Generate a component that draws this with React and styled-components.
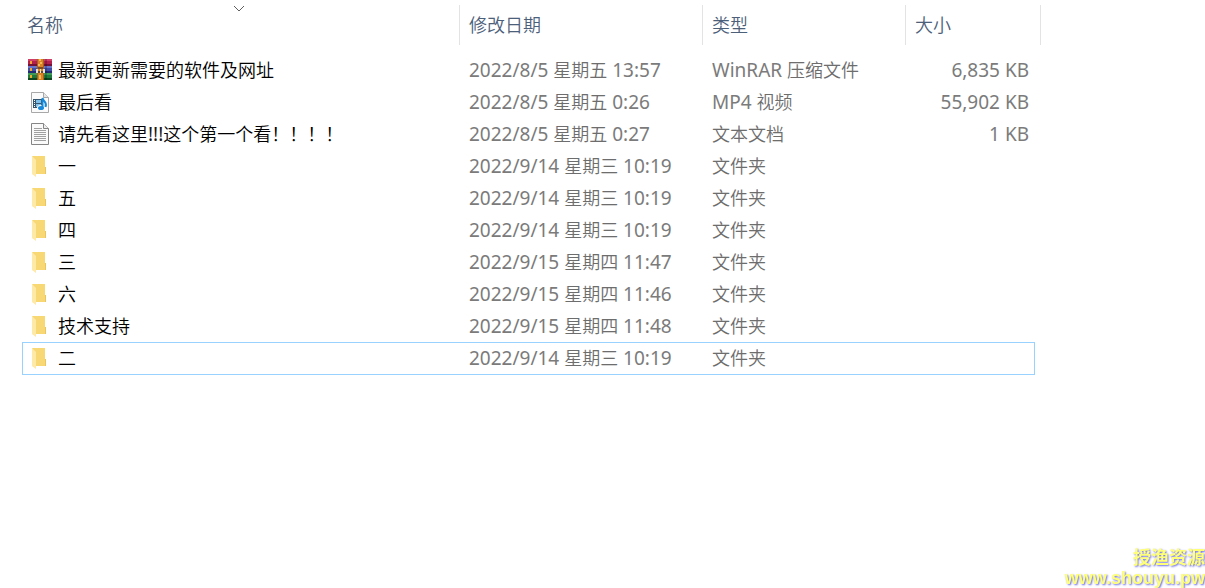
import React from 'react'
import styled, {createGlobalStyle} from 'styled-components'

const files = [
    {name:'最新更新需要的软件及网址', date:'2022/8/5 星期五 13:57', type:'WinRAR 压缩文件', size:'6,835 KB', icon:'rar'},
    {name:'最后看', date:'2022/8/5 星期五 0:26', type:'MP4 视频', size:'55,902 KB', icon:'video'},
    {name:'请先看这里!!!这个第一个看！！！！', date:'2022/8/5 星期五 0:27', type:'文本文档', size:'1 KB', icon:'text'},
    {name:'一', date:'2022/9/14 星期三 10:19', type:'文件夹', icon:'folder'},
    {name:'五', date:'2022/9/14 星期三 10:19', type:'文件夹', icon:'folder'},
    {name:'四', date:'2022/9/14 星期三 10:19', type:'文件夹', icon:'folder'},
    {name:'三', date:'2022/9/15 星期四 11:47', type:'文件夹', icon:'folder'},
    {name:'六', date:'2022/9/15 星期四 11:46', type:'文件夹', icon:'folder'},
    {name:'技术支持', date:'2022/9/15 星期四 11:48', type:'文件夹', icon:'folder'},
    {name:'二', date:'2022/9/14 星期三 10:19', type:'文件夹', icon:'folder', focused:true},
]

const RarIcon = ()=>(
    <Icon viewBox="0 0 24 24">
        <rect x="0" y="1" width="24" height="7" fill="#b3204d"/>
        <rect x="0" y="1" width="24" height="2" fill="#cf3f68"/>
        <rect x="0" y="6" width="24" height="2" fill="#741237"/>
        <rect x="0" y="8" width="24" height="7" fill="#3f4fa8"/>
        <rect x="0" y="8" width="24" height="2" fill="#6a76c8"/>
        <rect x="0" y="13" width="24" height="2" fill="#222b70"/>
        <rect x="0" y="15" width="24" height="7" fill="#1d7a3c"/>
        <rect x="0" y="15" width="24" height="2" fill="#3f9a58"/>
        <rect x="0" y="20" width="24" height="2" fill="#0c4520"/>
        <path d="M2 3h2v3H2zM2 10h2v3H2zM2 17h2v3H2z" fill="#f0a52c"/>
        <path d="M17 1h2v21h-2z" fill="#00000033"/>
        <rect x="9" y="1" width="7" height="21" fill="#d98324"/>
        <path d="M11 1h2v2h-2zM12 4h2v2h-2zM10 6h2v2h-2zM11 17h2v4h-2z" fill="#f8b95a"/>
        <path d="M9 1h1v21H9zM15 1h1v21h-1z" fill="#a8601c"/>
        <path d="M8 11h2v4H8zM15 11h2v4h-2z" fill="#e4e2dd"/>
        <path d="M10 9h5v2h-5z" fill="#7b4a26"/>
        <path d="M10 13h5v2h-5z" fill="#6b4630"/>
        <rect x="12" y="11" width="1" height="4" fill="#f4e8cf"/>
    </Icon>
)

const VideoIcon = ()=>(
    <Icon viewBox="0 0 24 24">
        <path d="M3.500 2.500h12l5 5v15h-17z" fill="#fbfbfb" stroke="#a8a8a8"/>
        <path d="M15.500 2.500v5h5" fill="#e6e6e6" stroke="#a8a8a8"/>
        <rect x="5" y="9" width="9" height="9" fill="#35546e"/>
        <path d="M8 10h5v3H8zM8 14h5v3H8z" fill="#7fc0ea"/>
        <path d="M6 10h1v1H6zM6 12h1v1H6zM6 14h1v1H6zM6 16h1v1H6z" fill="#fff"/>
        <ellipse cx="13" cy="18" rx="4" ry="3" fill="#fbfbfb"/>
        <path d="M14.500 18V8c1 4 5 4 3 9" fill="none" stroke="#1688d8" strokeWidth="2"/>
        <ellipse cx="13" cy="18" rx="3" ry="2" fill="#1688d8"/>
    </Icon>
)

const TextIcon = ()=>(
    <Icon viewBox="0 0 24 24">
        <path d="M3.500 1.500h12l5 5v16h-17z" fill="#fafafa" stroke="#858585"/>
        <path d="M15.500 1.500v5h5" fill="#eee" stroke="#858585"/>
        <path d="M6 6.500h8M6 8.500h12M6 10.500h12M6 12.500h12M6 14.500h12M6 16.500h12M6 18.500h12" stroke="#a0a0a0"/>
    </Icon>
)

const FolderIcon = ()=>(
    <Icon viewBox="0 0 24 24">
        <path d="M4 2h13v11h1v7H8z" fill="#f8d775"/>
        <path d="M17 13h1v7h-1z" fill="#e9c45f"/>
        <path d="M4 2l4 4v17l-4-3z" fill="#ffe9a6"/>
    </Icon>
)

const icons = {rar:RarIcon, video:VideoIcon, text:TextIcon, folder:FolderIcon}

// latin runs are set one size larger than the chinese around them
const Mixed = ({text})=> text.split(/([\x20-\x7e]+)/).map((part, i)=>
    i % 2 ? <Latin key={i}>{part}</Latin> : part
)

const FileRow = ({file})=>{
    const FileIcon = icons[file.icon]
    return(
        <Row $focused={file.focused}>
            <NameCell>
                <FileName><FileIcon/><NameText><Mixed text={file.name}/></NameText></FileName>
            </NameCell>
            <Cell><Mixed text={file.date}/></Cell>
            <Cell><Mixed text={file.type}/></Cell>
            <SizeCell><Mixed text={file.size || ''}/></SizeCell>
        </Row>
    )
}

export default function App(){
    return(
        <Page>
            <GlobalStyle/>
            <FileTable>
                <colgroup>
                    <col/>
                    <Col $width={243}/>
                    <Col $width={203}/>
                    <Col $width={129}/>
                    <Col $width={6}/>
                </colgroup>
                <thead>
                    <tr>
                        <HeadCell aria-sort="ascending">
                            <HeadButton $first>名称</HeadButton>
                            <SortMark viewBox="0 0 12 7"><path d="M1 1l5 5 5-5"/></SortMark>
                        </HeadCell>
                        <HeadCell><HeadButton>修改日期</HeadButton></HeadCell>
                        <HeadCell><HeadButton>类型</HeadButton></HeadCell>
                        <HeadCell colSpan={2}><HeadButton>大小</HeadButton></HeadCell>
                    </tr>
                </thead>
                <tbody>
                    {files.map(file=><FileRow key={file.name} file={file}/>)}
                </tbody>
            </FileTable>
            <Watermark>
                <span>授渔资源</span>
                <span>www.shouyu.pw</span>
            </Watermark>
        </Page>
    )
}

const GlobalStyle = createGlobalStyle`
body{
    margin:0;
    background-color:#FFFFFF;
    font-family:"Noto Sans CJK SC", sans-serif;
    font-size:18px;
    font-weight:350;
}
`

const Page = styled.main`
box-sizing:border-box;
min-height:100vh;
padding:5px 164px 0px 22px;
`

const FileTable = styled.table`
width:100%;
table-layout:fixed;
border-collapse:separate;
border-spacing:0px;
color:#6d6d6d;
`

const Col = styled.col`
width:${props=>props.$width}px;
`

const HeadCell = styled.th`
position:relative;
padding:0px 0px 9px;
`

const HeadButton = styled.button`
display:block;
width:100%;
height:40px;
padding:0px 0px 2px ${props=>props.$first ? '5px' : '9px'};
border:0;
border-right:1px solid #e3e3e3;
background:none;
color:#4c607a;
font:inherit;
font-weight:350;
text-align:left;
`

const SortMark = styled.svg`
position:absolute;
top:0px;
left:calc(50% - 8px);
width:12px;
height:7px;
fill:none;
stroke:#5f5f5f;
`

const Cell = styled.td`
box-sizing:border-box;
padding:0px 0px 2px 9px;
border:0px solid transparent;
border-width:1px 0px;
line-height:28px;
vertical-align:top;
white-space:nowrap;
`

const NameCell = styled(Cell)`
padding:0px 0px 0px 5px;
border-left-width:1px;
color:#000000;
`

const SizeCell = styled(Cell)`
padding:0px 5px 2px 0px;
border-right-width:1px;
text-align:right;
`

const Row = styled.tr`
height:${props=>props.$focused ? '33px' : '32px'};
${Cell}, ${NameCell}, ${SizeCell}{
    border-color:${props=>props.$focused ? '#99d1ff' : 'transparent'};
}
`

const FileName = styled.div`
display:flex;
align-items:center;
gap:6px;
height:30px;
`

const NameText = styled.span`
padding-bottom:2px;
`

const Icon = styled.svg`
flex:none;
width:24px;
height:24px;
`

const Latin = styled.span`
font-family:"Noto Sans", sans-serif;
font-size:19px;
font-weight:400;
line-height:1;
opacity:0.9;
`

const Watermark = styled.div`
position:fixed;
right:0px;
bottom:0px;
display:flex;
flex-direction:column;
align-items:flex-end;
color:#ffff78;
font-family:"Liberation Sans", "Noto Sans CJK SC", sans-serif;
font-weight:700;
line-height:20px;
text-shadow:1px 1px 2px #6a6ae8;
`
